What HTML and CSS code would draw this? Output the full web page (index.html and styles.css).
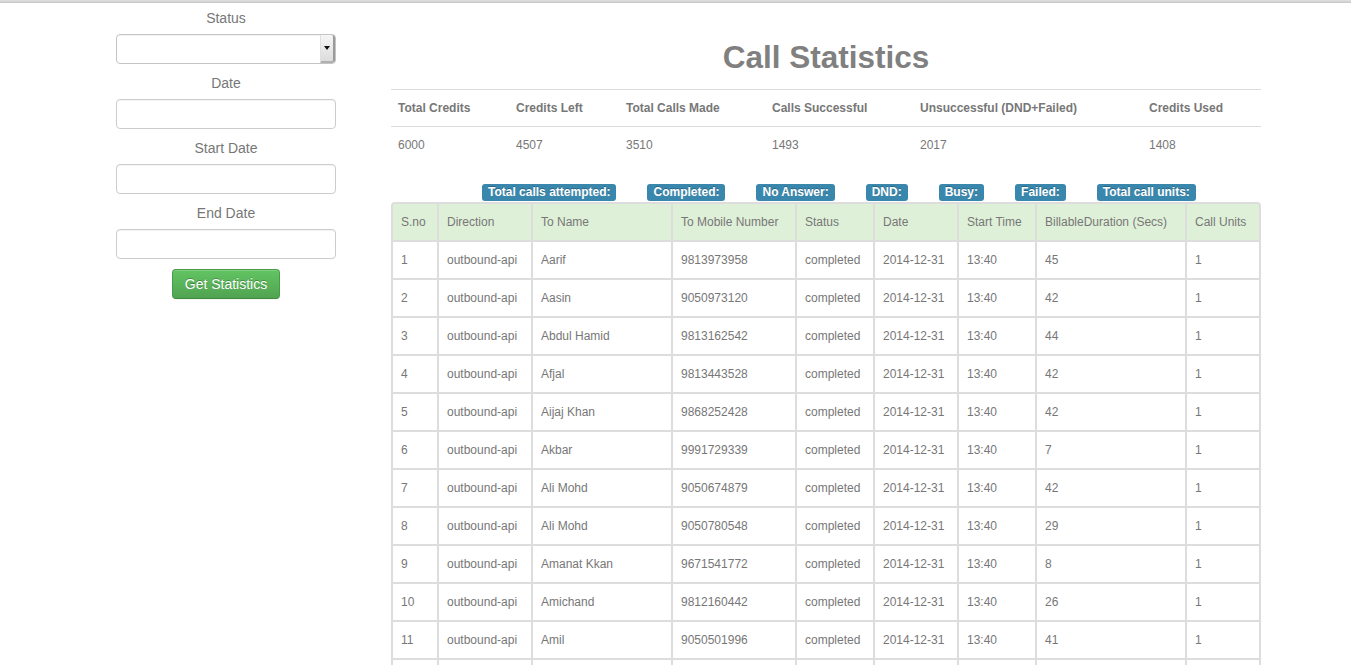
FILE: index.html
```html
<!DOCTYPE html>
<html>
<head>
<meta charset="utf-8">
<title>Call Statistics</title>
<link rel="stylesheet" href="styles.css">
</head>
<body>
<div class="topbar"></div>
<div class="page">
  <aside class="filters">
    <label class="flabel">Status</label>
    <div class="select"><span class="select-arrow"><span class="tri"></span></span></div>
    <label class="flabel">Date</label>
    <div class="input"></div>
    <label class="flabel">Start Date</label>
    <div class="input"></div>
    <label class="flabel">End Date</label>
    <div class="input"></div>
    <div class="btn-wrap"><button class="btn-success">Get Statistics</button></div>
  </aside>
  <main class="content">
    <h1 class="title">Call Statistics</h1>
    <table class="stats">
      <tr>
        <th class="s1">Total Credits</th>
        <th class="s2">Credits Left</th>
        <th class="s3">Total Calls Made</th>
        <th class="s4">Calls Successful</th>
        <th class="s5">Unsuccessful (DND+Failed)</th>
        <th class="s6">Credits Used</th>
      </tr>
      <tr>
        <td>6000</td><td>4507</td><td>3510</td><td>1493</td><td>2017</td><td>1408</td>
      </tr>
    </table>
    <div class="badges">
      <span class="badge">Total calls attempted:</span>
      <span class="badge">Completed:</span>
      <span class="badge">No Answer:</span>
      <span class="badge">DND:</span>
      <span class="badge">Busy:</span>
      <span class="badge">Failed:</span>
      <span class="badge">Total call units:</span>
    </div>
    <table class="calls">
      <thead>
        <tr>
          <th class="c1">S.no</th>
          <th class="c2">Direction</th>
          <th class="c3">To Name</th>
          <th class="c4">To Mobile Number</th>
          <th class="c5">Status</th>
          <th class="c6">Date</th>
          <th class="c7">Start Time</th>
          <th class="c8">BillableDuration (Secs)</th>
          <th class="c9">Call Units</th>
        </tr>
      </thead>
      <tbody>
        <tr><td>1</td><td>outbound-api</td><td>Aarif</td><td>9813973958</td><td>completed</td><td>2014-12-31</td><td>13:40</td><td>45</td><td>1</td></tr>
        <tr><td>2</td><td>outbound-api</td><td>Aasin</td><td>9050973120</td><td>completed</td><td>2014-12-31</td><td>13:40</td><td>42</td><td>1</td></tr>
        <tr><td>3</td><td>outbound-api</td><td>Abdul Hamid</td><td>9813162542</td><td>completed</td><td>2014-12-31</td><td>13:40</td><td>44</td><td>1</td></tr>
        <tr><td>4</td><td>outbound-api</td><td>Afjal</td><td>9813443528</td><td>completed</td><td>2014-12-31</td><td>13:40</td><td>42</td><td>1</td></tr>
        <tr><td>5</td><td>outbound-api</td><td>Aijaj Khan</td><td>9868252428</td><td>completed</td><td>2014-12-31</td><td>13:40</td><td>42</td><td>1</td></tr>
        <tr><td>6</td><td>outbound-api</td><td>Akbar</td><td>9991729339</td><td>completed</td><td>2014-12-31</td><td>13:40</td><td>7</td><td>1</td></tr>
        <tr><td>7</td><td>outbound-api</td><td>Ali Mohd</td><td>9050674879</td><td>completed</td><td>2014-12-31</td><td>13:40</td><td>42</td><td>1</td></tr>
        <tr><td>8</td><td>outbound-api</td><td>Ali Mohd</td><td>9050780548</td><td>completed</td><td>2014-12-31</td><td>13:40</td><td>29</td><td>1</td></tr>
        <tr><td>9</td><td>outbound-api</td><td>Amanat Kkan</td><td>9671541772</td><td>completed</td><td>2014-12-31</td><td>13:40</td><td>8</td><td>1</td></tr>
        <tr><td>10</td><td>outbound-api</td><td>Amichand</td><td>9812160442</td><td>completed</td><td>2014-12-31</td><td>13:40</td><td>26</td><td>1</td></tr>
        <tr><td>11</td><td>outbound-api</td><td>Amil</td><td>9050501996</td><td>completed</td><td>2014-12-31</td><td>13:40</td><td>41</td><td>1</td></tr>
        <tr class="blank"><td></td><td></td><td></td><td></td><td></td><td></td><td></td><td></td><td></td></tr>
      </tbody>
    </table>
  </main>
</div>
</body>
</html>
```
FILE: styles.css
```css
* { box-sizing: border-box; }
html { scrollbar-width: none; overflow: hidden; }
html::-webkit-scrollbar { display: none; }
body {
  margin: 0;
  font-family: "Liberation Sans", Arial, Helvetica, sans-serif;
  color: #777;
  background: #fff;
  height: 665px;
  overflow: hidden;
}
.topbar {
  height: 3px;
  background: linear-gradient(#e2e2e2, #c6c6c6);
}
.page {
  display: flex;
  align-items: flex-start;
  padding-left: 116px;
  gap: 55px;
}
.filters {
  width: 220px;
  display: flex;
  flex-direction: column;
  padding-top: 5px;
}
.flabel {
  display: block;
  text-align: center;
  font-size: 14px;
  line-height: 20px;
  margin-bottom: 6px;
  color: #777;
}
.input, .select {
  height: 30px;
  border: 1px solid #ccc;
  border-radius: 4px;
  background: #fff;
  margin-bottom: 9px;
  box-shadow: inset 0 1px 1px rgba(0,0,0,0.05);
}
.select {
  display: flex;
  justify-content: flex-end;
  border-color: #c4c4c4;
}
.select-arrow {
  width: 15px;
  height: 28px;
  background: linear-gradient(#f6f6f6, #dcdcdc);
  border-left: 1px solid #e0e0e0;
  border-right: 2px solid #9a9a9a;
  border-bottom: 2px solid #b0b0b0;
  border-radius: 0 3px 3px 0;
  display: flex;
  align-items: center;
  justify-content: center;
}
.tri {
  width: 0;
  height: 0;
  border-left: 3px solid transparent;
  border-right: 3px solid transparent;
  border-top: 4px solid #111;
}
.btn-wrap {
  display: flex;
  justify-content: center;
  margin-top: 1px;
}
.btn-success {
  font-family: "Liberation Sans", Arial, Helvetica, sans-serif;
  font-size: 14px;
  line-height: 20px;
  color: #fff;
  padding: 4px 12px;
  border: 1px solid #4a9a4a;
  border-bottom-color: #3d8a3d;
  border-radius: 4px;
  background: linear-gradient(#62c462, #51a351);
  text-shadow: 0 -1px 0 rgba(0,0,0,0.25);
  box-shadow: inset 0 1px 0 rgba(255,255,255,0.2), 0 1px 2px rgba(0,0,0,0.05);
}
.content {
  width: 870px;
}
.title {
  margin: 34px 0 12px;
  text-align: center;
  font-size: 31.5px;
  line-height: 40px;
  font-weight: bold;
  color: #808080;
}
.stats {
  width: 870px;
  border-collapse: collapse;
  table-layout: fixed;
  font-size: 12px;
  line-height: 20px;
  margin-bottom: 21px;
}
.stats th, .stats td {
  text-align: left;
  padding: 8px 7px;
  border-top: 1px solid #ddd;
}
.stats th { font-weight: bold; color: #777; }
.s1 { width: 118px; }
.s2 { width: 110px; }
.s3 { width: 146px; }
.s4 { width: 148px; }
.s5 { width: 229px; }
.s6 { width: 119px; }
.badges {
  display: flex;
  gap: 31px;
  padding-left: 91px;
  margin-bottom: 1px;
}
.badge {
  display: inline-block;
  background: #3a87ad;
  color: #fff;
  font-size: 12px;
  font-weight: bold;
  line-height: 13px;
  padding: 2px 6px;
  border-radius: 3px;
  text-shadow: 0 -1px 0 rgba(0,0,0,0.25);
  white-space: nowrap;
}
.calls {
  width: 870px;
  border-collapse: separate;
  border-spacing: 0;
  table-layout: fixed;
  font-size: 12px;
  line-height: 20px;
}
.calls th, .calls td {
  text-align: left;
  font-weight: normal;
  padding: 8px 7px 8px 8px;
  border-top: 2px solid #ddd;
  border-left: 2px solid #ddd;
  white-space: nowrap;
  overflow: hidden;
}
.calls .blank td { height: 38px; }
.calls th:last-child, .calls td:last-child { border-right: 2px solid #ddd; }
.calls thead th { background: #dff0d8; }
.calls thead th:first-child { border-top-left-radius: 4px; }
.calls thead th:last-child { border-top-right-radius: 4px; }
.c1 { width: 46px; }
.c2 { width: 94px; }
.c3 { width: 140px; }
.c4 { width: 124px; }
.c5 { width: 78px; }
.c6 { width: 84px; }
.c7 { width: 78px; }
.c8 { width: 150px; }
.c9 { width: 76px; }
```
